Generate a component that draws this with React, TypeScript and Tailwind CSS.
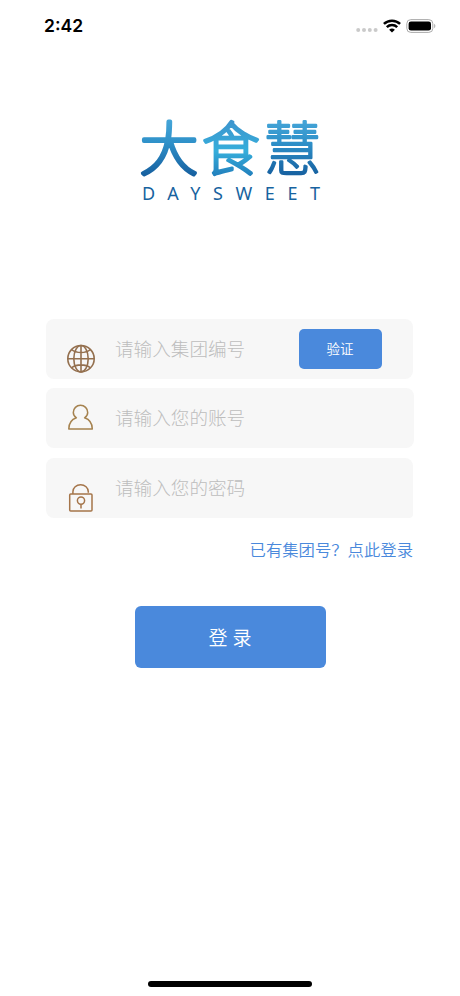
import type { ReactNode } from 'react';

export default function App() {
    return (
        <div className="flex h-[996px] w-[460px] flex-col bg-white font-['Noto_Sans_CJK_SC',sans-serif]">
            <StatusBar />
            <Logo />
            <main className="mt-[89px] flex flex-col items-center">
                <form className="flex w-[368px] flex-col">
                    <Field
                        icon={<GlobeIcon />}
                        placeholder="请输入集团编号"
                        className="w-[367px] rounded-lg"
                    >
                        <button
                            type="button"
                            className="mr-[31px] h-10 w-[83px] shrink-0 rounded-[5px] bg-[#4a89dc] pr-px pb-px text-[13.5px] font-[350] text-white"
                        >
                            验证
                        </button>
                    </Field>
                    <Field
                        icon={<UserIcon />}
                        placeholder="请输入您的账号"
                        className="mt-[9px] rounded-lg"
                    />
                    <Field
                        icon={<LockIcon />}
                        placeholder="请输入您的密码"
                        className="mt-[10px] w-[367px] rounded-lg rounded-br-sm"
                    />
                </form>
                <div className="mt-[19px] flex w-[368px] justify-end pr-px">
                    <a
                        href="#"
                        className="text-[16.35px] leading-6 font-[350] text-[#4a89dc]"
                    >
                        已有集团号？点此登录
                    </a>
                </div>
                <button
                    type="button"
                    className="mt-[45px] h-[62px] w-[191px] rounded-md bg-[#4a89dc] text-[19px] font-[350] [word-spacing:1px] whitespace-pre text-white"
                >
                    登 录
                </button>
            </main>
            <div className="mx-auto mt-auto mb-[9px] h-[6px] w-[164px] rounded-full bg-black" />
        </div>
    );
}

function StatusBar() {
    return (
        <header className="flex h-[52px] items-center justify-between pr-[24px] pl-[44px]">
            <span className="font-['Inter',sans-serif] text-[17.5px] font-semibold">
                2:42
            </span>
            <div className="flex items-center gap-[5px]">
                <svg width="22" height="4" viewBox="0 0 22 4" fill="#cacaca" className="mt-[8px]">
                    <circle cx="2.2" cy="2" r="2" />
                    <circle cx="8" cy="2" r="2" />
                    <circle cx="13.8" cy="2" r="2" />
                    <circle cx="19.6" cy="2" r="2" />
                </svg>
                <svg width="18" height="14" viewBox="0 0 18 14" fill="none">
                    <path
                        d="M.9 4.9a11.8 11.8 0 0 1 16.2 0M3.8 8.2a7.5 7.5 0 0 1 10.4 0"
                        stroke="#000"
                        strokeWidth="2.5"
                    />
                    <path d="M9 13.6 6.1 10.8a4.2 4.2 0 0 1 5.8 0z" fill="#000" />
                </svg>
                <svg width="30" height="14" viewBox="0 0 30 14" fill="none">
                    <rect x=".8" y=".6" width="26" height="12.8" rx="4" stroke="#aaa" />
                    <rect x="2.6" y="2.4" width="22.4" height="9.2" rx="2.4" fill="#000" />
                    <path d="M28.2 4.8c1.6.7 1.6 3.7 0 4.4z" fill="#aaa" />
                </svg>
            </div>
        </header>
    );
}

function Logo() {
    return (
        <svg
            width="200"
            height="140"
            viewBox="0 -20 200 140"
            className="mx-auto mt-[38px] shrink-0"
        >
            <defs>
                <linearGradient
                    id="deep"
                    gradientUnits="userSpaceOnUse"
                    x1="0"
                    y1="10"
                    x2="0"
                    y2="66"
                >
                    <stop offset="0" stopColor="#45a5d8" />
                    <stop offset="0.4" stopColor="#2f91c9" />
                    <stop offset="1" stopColor="#165f9f" />
                </linearGradient>
                <linearGradient
                    id="bright"
                    gradientUnits="userSpaceOnUse"
                    x1="0"
                    y1="10"
                    x2="0"
                    y2="66"
                >
                    <stop offset="0" stopColor="#3d94cd" />
                    <stop offset="0.55" stopColor="#36aedb" />
                    <stop offset="1" stopColor="#2280bd" />
                </linearGradient>
            </defs>
            <g strokeLinejoin="round" fontSize="58" fontWeight="100">
                <text x="10" y="59.5" fill="url(#deep)" stroke="url(#deep)" strokeWidth="4">
                    大
                </text>
                <text x="72" y="59.5" fill="url(#bright)" stroke="url(#bright)" strokeWidth="3.2">
                    食
                </text>
                <text x="133.5" y="59.5" fill="url(#deep)" stroke="url(#deep)" strokeWidth="2.6">
                    慧
                </text>
            </g>
            <text
                x="12"
                y="90"
                fill="#1763a0"
                fontSize="18"
                textLength="178"
                className="font-['Noto_Sans',sans-serif]"
            >
                DAYSWEET
            </text>
        </svg>
    );
}

function Field({
    icon,
    placeholder,
    className,
    children,
}: {
    icon: ReactNode;
    placeholder: string;
    className: string;
    children?: ReactNode;
}) {
    return (
        <div
            className={`flex h-[60px] items-center bg-[#f7f7f7] pl-5 ${className}`}
        >
            {icon}
            <input
                placeholder={placeholder}
                className="ml-[19px] h-10 w-0 min-w-0 flex-1 bg-transparent pb-[3px] font-['Noto_Sans_CJK_SC',sans-serif] text-[18.6px] font-light outline-none placeholder:text-[#bdbdbd]"
            />
            {children}
        </div>
    );
}

function GlobeIcon() {
    return (
        <svg
            width="30"
            height="30"
            viewBox="0 0 30 30"
            fill="none"
            stroke="#94704f"
            strokeWidth="1.6"
            className="mt-[19px] shrink-0"
        >
            <circle cx="15" cy="14.7" r="13.2" />
            <ellipse cx="15" cy="14.7" rx="7.2" ry="13.2" />
            <path d="M15 1.5v26.4M1.8 14.7h26.4M5.5 5.5c5 4 14 4 19 0M5.5 23.9c5-4 14-4 19 0" />
        </svg>
    );
}

function UserIcon() {
    return (
        <svg
            width="30"
            height="30"
            viewBox="0 0 30 30"
            fill="none"
            stroke="#a5824f"
            strokeWidth="1.5"
            strokeLinejoin="round"
            className="shrink-0"
        >
            <path d="M10.4 14.8C8.4 13.4 7.3 11.7 7.3 9.4a7.2 7.1 0 0 1 14.4 0C21.7 11.7 20.6 13.4 18.6 14.8C23.5 16.5 26.3 20.5 26.3 26.1H2.8C2.8 20.5 5.5 16.5 10.4 14.8z" />
        </svg>
    );
}

function LockIcon() {
    return (
        <svg
            width="30"
            height="30"
            viewBox="0 0 30 30"
            fill="none"
            stroke="#a5754a"
            strokeWidth="1.5"
            className="mt-[20px] shrink-0"
        >
            <rect x="3.7" y="11" width="22.3" height="16.9" rx="1" />
            <path d="M6.9 11V8.7a7.7 7 0 0 1 15.4 0v1M15 21.2v4.3" />
            <circle cx="15" cy="17.6" r="3.6" />
        </svg>
    );
}
